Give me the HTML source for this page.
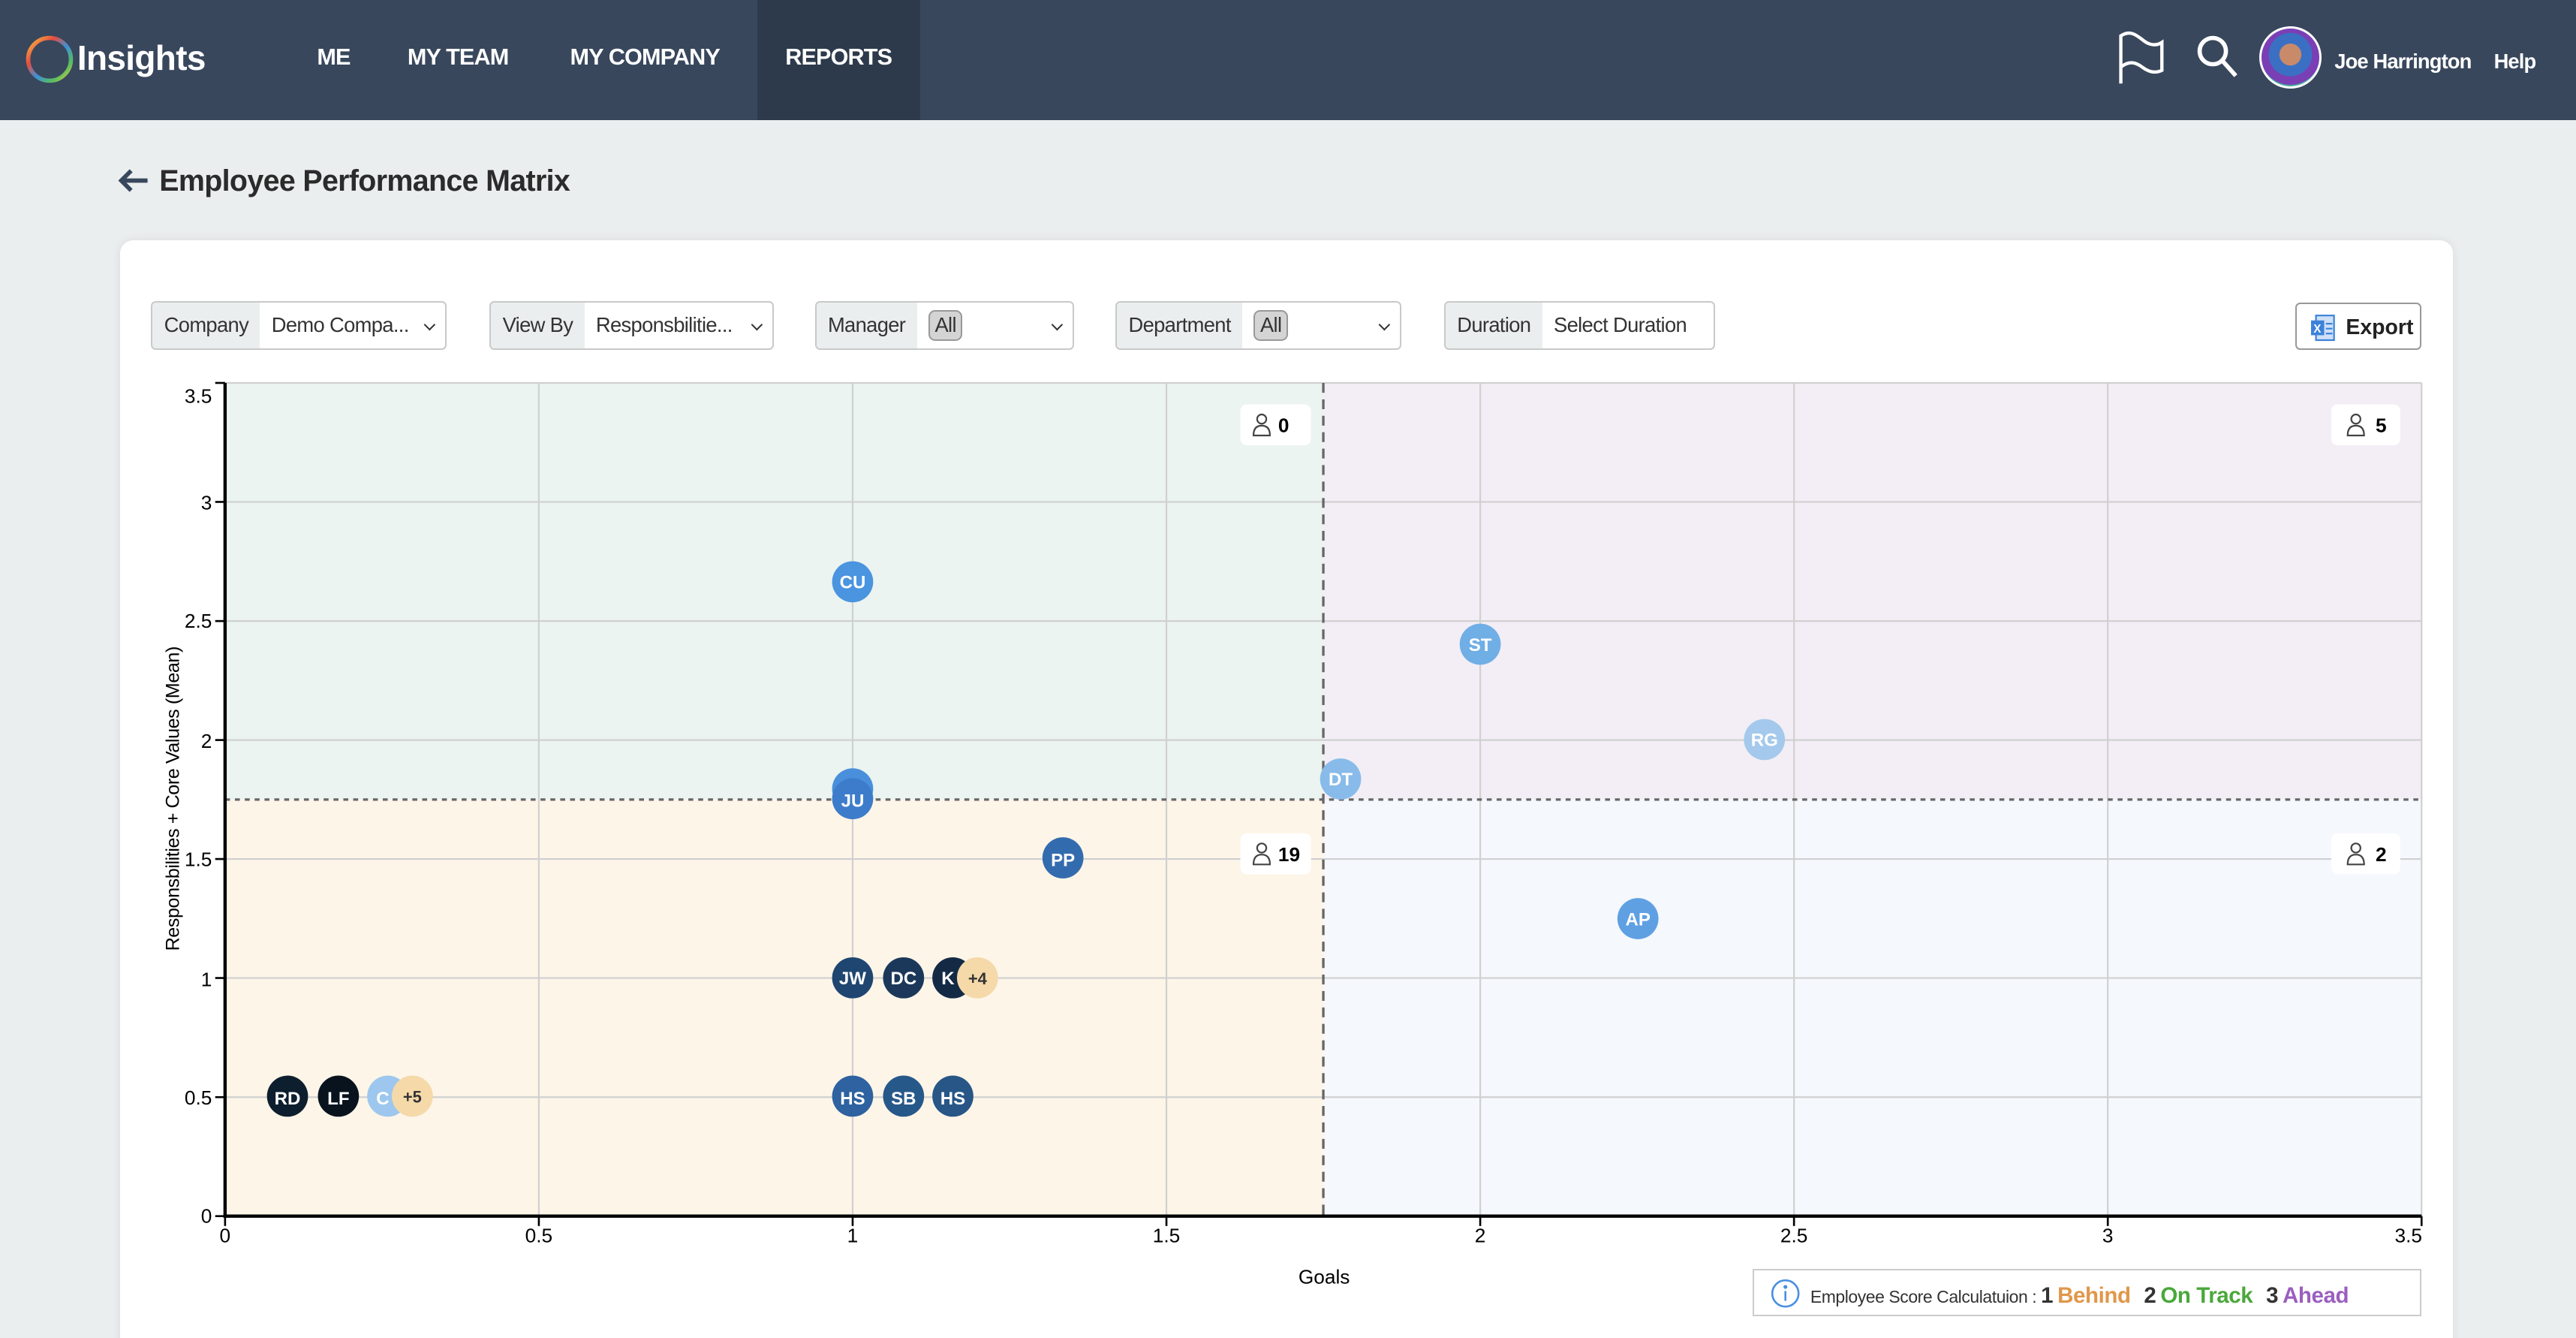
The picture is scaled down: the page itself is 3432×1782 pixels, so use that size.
<!DOCTYPE html>
<html><head><meta charset="utf-8"><style>
html,body{margin:0;padding:0;width:3432px;height:1782px;overflow:hidden;background:#ebeeef}
#w{zoom:2.18878;width:1568px;height:814px;position:relative;font-family:"Liberation Sans",sans-serif;background:#ebeeef;overflow:hidden}
.nav{position:absolute;left:0;top:0;width:1568px;height:73px;background:#38475c}
.nav .it{position:absolute;top:27px;color:#fff;font-weight:bold;font-size:14px;letter-spacing:-0.4px}
.rep{position:absolute;left:461px;top:0;width:99px;height:73px;background:#2d3a4b}
.card{position:absolute;left:73px;top:146px;width:1420px;height:700px;background:#fff;border-radius:8px;box-shadow:0 0 6px rgba(0,0,0,.08)}
.f{position:absolute;top:183px;height:30px;border:1px solid #c9c9c9;border-radius:3px;background:#fff;font-size:12.5px;letter-spacing:-0.3px;color:#333;display:flex;align-items:center;box-sizing:border-box;overflow:hidden;white-space:nowrap}
.f .l{background:#ebeeef;height:100%;display:flex;align-items:center;padding:0 7px}
.f .v{padding:0 7px;flex:1;position:relative;height:100%;display:flex;align-items:center;overflow:hidden}
.chev{position:absolute;right:7px;top:11px;width:4px;height:4px;border-right:1px solid #333;border-bottom:1px solid #333;transform:rotate(45deg)}
.all{background:#d4d4d4;border:1px solid #999;border-radius:4px;padding:1px 3px}
</style></head><body><div id="w">
<div class="nav">
 <div class="rep"></div>
 <svg style="position:absolute;left:14px;top:20px" width="32" height="32" viewBox="0 0 32 32"><defs><linearGradient id="g" x1="0" y1="0" x2="1" y2="1"><stop offset="0" stop-color="#f6c744"/><stop offset=".3" stop-color="#e84c3d"/><stop offset=".55" stop-color="#3f8fd8"/><stop offset=".8" stop-color="#5bbf5b"/><stop offset="1" stop-color="#f6c744"/></linearGradient></defs><circle cx="16" cy="16" r="13" fill="none" stroke="url(#g)" stroke-width="2.6"/></svg>
 <div class="it" style="left:47px;top:23px;font-size:21px;letter-spacing:-0.3px">Insights</div>
 <div class="it" style="left:193px">ME</div>
 <div class="it" style="left:248px">MY TEAM</div>
 <div class="it" style="left:347px">MY COMPANY</div>
 <div class="it" style="left:478px">REPORTS</div>
 <svg style="position:absolute;left:1288px;top:18px" width="30" height="36" viewBox="0 0 30 36" fill="none" stroke="#fff" stroke-width="2"><path d="M3 33V4c6-4 10 0 14 3s8 3 11 1v17c-4 2-8 1-12-2s-8-4-13 0"/></svg>
 <svg style="position:absolute;left:1336px;top:20px" width="28" height="28" viewBox="0 0 28 28" fill="none" stroke="#fff" stroke-width="2.6"><circle cx="11" cy="11" r="8"/><path d="M17 17l8 9"/></svg>
 <div style="position:absolute;left:1375px;top:16px;width:38px;height:38px;border-radius:50%;background:radial-gradient(circle at 50% 45%,#c98a6a 0 25%,#3b6fc4 26% 50%,#7a3fb5 51% 70%,#44b0a0 71%);border:1.5px solid #fff;box-sizing:border-box"></div>
 <div class="it" style="left:1421px;top:30px;font-size:12.5px">Joe Harrington</div>
 <div class="it" style="left:1518px;top:30px;font-size:12.5px">Help</div>
</div>
<svg style="position:absolute;left:71px;top:102px" width="20" height="16" viewBox="0 0 20 16" fill="none" stroke="#38475c" stroke-width="2.6"><path d="M19 8H3M9 2L3 8l6 6"/></svg>
<div style="position:absolute;left:97px;top:100px;font-size:18px;font-weight:bold;color:#2b2b2b;letter-spacing:-0.3px">Employee Performance Matrix</div>
<div class="card"></div>
<div class="f" style="left:92px;width:180px"><div class="l">Company</div><div class="v">Demo Compa...<span class="chev"></span></div></div>
<div class="f" style="left:298px;width:173px"><div class="l">View By</div><div class="v">Responsbilitie...<span class="chev"></span></div></div>
<div class="f" style="left:496px;width:158px"><div class="l">Manager</div><div class="v"><span class="all">All</span><span class="chev"></span></div></div>
<div class="f" style="left:679px;width:174px"><div class="l">Department</div><div class="v"><span class="all">All</span><span class="chev"></span></div></div>
<div class="f" style="left:879px;width:165px"><div class="l">Duration</div><div class="v">Select Duration</div></div>
<div style="position:absolute;left:1397px;top:184px;width:77px;height:29px;border:1px solid #999;border-radius:3px;box-sizing:border-box;font-size:13px;font-weight:bold;color:#222">
 <svg style="position:absolute;left:9px;top:6px" width="16" height="17" viewBox="0 0 16 17"><rect x="3" y="1" width="11" height="15" fill="#cfe0f7" stroke="#3b82d9"/><rect x="0" y="4" width="8" height="9" fill="#3b82d9"/><text x="1.5" y="11.5" font-size="7" fill="#fff" font-family="Liberation Sans">X</text><path d="M9 6h4M9 9h4M9 12h4" stroke="#3b82d9"/></svg>
 <span style="position:absolute;left:30px;top:7px">Export</span></div>
<svg style="position:absolute;left:0;top:0" width="1568" height="814" font-family="Liberation Sans">
 <rect x="137" y="233" width="668.5" height="253.5" fill="#ebf4f0"/>
 <rect x="805.5" y="233" width="668.5" height="253.5" fill="#f3eef5"/>
 <rect x="137" y="486.5" width="668.5" height="253.5" fill="#fdf5e8"/>
 <rect x="805.5" y="486.5" width="668.5" height="253.5" fill="#f5f8fd"/>
 <g stroke="#d0d0d0" stroke-width="1">
  <line x1="328" y1="233" x2="328" y2="740"/><line x1="519" y1="233" x2="519" y2="740"/><line x1="710" y1="233" x2="710" y2="740"/><line x1="901" y1="233" x2="901" y2="740"/><line x1="1092" y1="233" x2="1092" y2="740"/><line x1="1283" y1="233" x2="1283" y2="740"/><line x1="1474" y1="233" x2="1474" y2="740"/>
  <line x1="137" y1="233" x2="1474" y2="233"/><line x1="137" y1="305.4" x2="1474" y2="305.4"/><line x1="137" y1="377.9" x2="1474" y2="377.9"/><line x1="137" y1="450.3" x2="1474" y2="450.3"/><line x1="137" y1="522.7" x2="1474" y2="522.7"/><line x1="137" y1="595.1" x2="1474" y2="595.1"/><line x1="137" y1="667.6" x2="1474" y2="667.6"/>
 </g>
 <line x1="137" y1="486.5" x2="1474" y2="486.5" stroke="#666" stroke-width="1.5" stroke-dasharray="3,3"/>
 <line x1="805.5" y1="233" x2="805.5" y2="740" stroke="#666" stroke-width="1.5" stroke-dasharray="6,4"/>
 <line x1="137" y1="233" x2="137" y2="741" stroke="#000" stroke-width="2"/>
 <line x1="136" y1="740" x2="1474" y2="740" stroke="#000" stroke-width="2"/>
 <g stroke="#000" stroke-width="1.2">
  <line x1="131" y1="233" x2="137" y2="233"/><line x1="131" y1="305.4" x2="137" y2="305.4"/><line x1="131" y1="377.9" x2="137" y2="377.9"/><line x1="131" y1="450.3" x2="137" y2="450.3"/><line x1="131" y1="522.7" x2="137" y2="522.7"/><line x1="131" y1="595.1" x2="137" y2="595.1"/><line x1="131" y1="667.6" x2="137" y2="667.6"/><line x1="131" y1="740" x2="137" y2="740"/>
  <line x1="137" y1="740" x2="137" y2="746"/><line x1="328" y1="740" x2="328" y2="746"/><line x1="519" y1="740" x2="519" y2="746"/><line x1="710" y1="740" x2="710" y2="746"/><line x1="901" y1="740" x2="901" y2="746"/><line x1="1092" y1="740" x2="1092" y2="746"/><line x1="1283" y1="740" x2="1283" y2="746"/><line x1="1474" y1="740" x2="1474" y2="746"/>
 </g>
 <g font-size="12" fill="#000" text-anchor="end">
  <text x="129" y="245">3.5</text><text x="129" y="310">3</text><text x="129" y="382">2.5</text><text x="129" y="455">2</text><text x="129" y="527">1.5</text><text x="129" y="600">1</text><text x="129" y="672">0.5</text><text x="129" y="744">0</text>
 </g>
 <g font-size="12" fill="#000" text-anchor="middle">
  <text x="137" y="756">0</text><text x="328" y="756">0.5</text><text x="519" y="756">1</text><text x="710" y="756">1.5</text><text x="901" y="756">2</text><text x="1092" y="756">2.5</text><text x="1283" y="756">3</text><text x="1466" y="756">3.5</text>
  <text x="806" y="781">Goals</text>
 </g>
 <text transform="translate(109,486) rotate(-90)" font-size="11.5" fill="#000" text-anchor="middle" letter-spacing="-0.2">Responsbilities + Core Values (Mean)</text>
 <g font-size="12" font-weight="bold" fill="#000">
  <rect x="755" y="246" width="43" height="25" rx="4" fill="#fff"/><text x="778" y="263">0</text>
  <rect x="1419" y="246" width="42" height="25" rx="4" fill="#fff"/><text x="1446" y="263">5</text>
  <rect x="755" y="507" width="43" height="25" rx="4" fill="#fff"/><text x="778" y="524">19</text>
  <rect x="1419" y="507" width="42" height="25" rx="4" fill="#fff"/><text x="1446" y="524">2</text>
 </g>
 <g fill="none" stroke="#444" stroke-width="1">
  <circle cx="768" cy="255" r="2.8"/><path d="M763 265q0-6 5-6t5 6z"/>
  <circle cx="1434" cy="255" r="2.8"/><path d="M1429 265q0-6 5-6t5 6z"/>
  <circle cx="768" cy="516" r="2.8"/><path d="M763 526q0-6 5-6t5 6z"/>
  <circle cx="1434" cy="516" r="2.8"/><path d="M1429 526q0-6 5-6t5 6z"/>
 </g>
 <g font-size="11" font-weight="bold" fill="#fff" text-anchor="middle">
  <circle cx="519" cy="354" r="12.5" fill="#4a94e0"/><text x="519" y="358">CU</text>
  <circle cx="901" cy="392" r="12.5" fill="#70aee6"/><text x="901" y="396">ST</text>
  <circle cx="1074" cy="450" r="12.5" fill="#a4c9ec"/><text x="1074" y="454">RG</text>
  <circle cx="816" cy="474" r="12.5" fill="#88bbea"/><text x="816" y="478">DT</text>
  <circle cx="519" cy="480" r="12.5" fill="#4a8fdc"/><circle cx="519" cy="486" r="12.5" fill="#3d7ccb"/><text x="519" y="491">JU</text>
  <circle cx="647" cy="522" r="12.5" fill="#336cae"/><text x="647" y="527">PP</text>
  <circle cx="997" cy="559" r="12.5" fill="#5fa0e3"/><text x="997" y="563">AP</text>
  <circle cx="519" cy="595" r="12.5" fill="#1f4670"/><text x="519" y="599">JW</text>
  <circle cx="550" cy="595" r="12.5" fill="#1b385a"/><text x="550" y="599">DC</text>
  <circle cx="580" cy="595" r="12.5" fill="#142a44"/><text x="577" y="599">K</text>
  <circle cx="595" cy="595" r="12.5" fill="#f5d9a9"/><text x="595" y="599" fill="#333" font-size="10">+4</text>
  <circle cx="519" cy="667" r="12.5" fill="#2e62a0"/><text x="519" y="672">HS</text>
  <circle cx="550" cy="667" r="12.5" fill="#27588a"/><text x="550" y="672">SB</text>
  <circle cx="580" cy="667" r="12.5" fill="#275687"/><text x="580" y="672">HS</text>
  <circle cx="175" cy="667" r="12.5" fill="#0d1e2e"/><text x="175" y="672">RD</text>
  <circle cx="206" cy="667" r="12.5" fill="#08131e"/><text x="206" y="672">LF</text>
  <circle cx="236" cy="667" r="12.5" fill="#9dc7ee"/><text x="233" y="672">C</text>
  <circle cx="251" cy="667" r="12.5" fill="#f5d9a9"/><text x="251" y="671" fill="#333" font-size="10">+5</text>
 </g>
</svg>
<div style="position:absolute;left:1067px;top:772px;width:407px;height:29px;border:1px solid #ccc;box-sizing:border-box;background:#fff;font-size:10.5px;letter-spacing:-0.2px;color:#333;white-space:nowrap">
 <svg style="position:absolute;left:10px;top:5px" width="18" height="18" viewBox="0 0 18 18" fill="none" stroke="#4a90e2" stroke-width="1.2"><circle cx="9" cy="9" r="8"/><path d="M9 7.5v6"/><circle cx="9" cy="5" r=".6" fill="#4a90e2"/></svg>
 <span style="position:absolute;left:34px;top:8px">Employee Score Calculatuion : <b style="font-size:13.5px;color:#333">1</b> <b style="font-size:13.5px;color:#e0974a">Behind</b>&nbsp;&nbsp; <b style="font-size:13.5px;color:#333">2</b> <b style="font-size:13.5px;color:#4aa83a">On Track</b>&nbsp;&nbsp; <b style="font-size:13.5px;color:#333">3</b> <b style="font-size:13.5px;color:#9b5fbf">Ahead</b></span>
</div>
</div></body></html>
